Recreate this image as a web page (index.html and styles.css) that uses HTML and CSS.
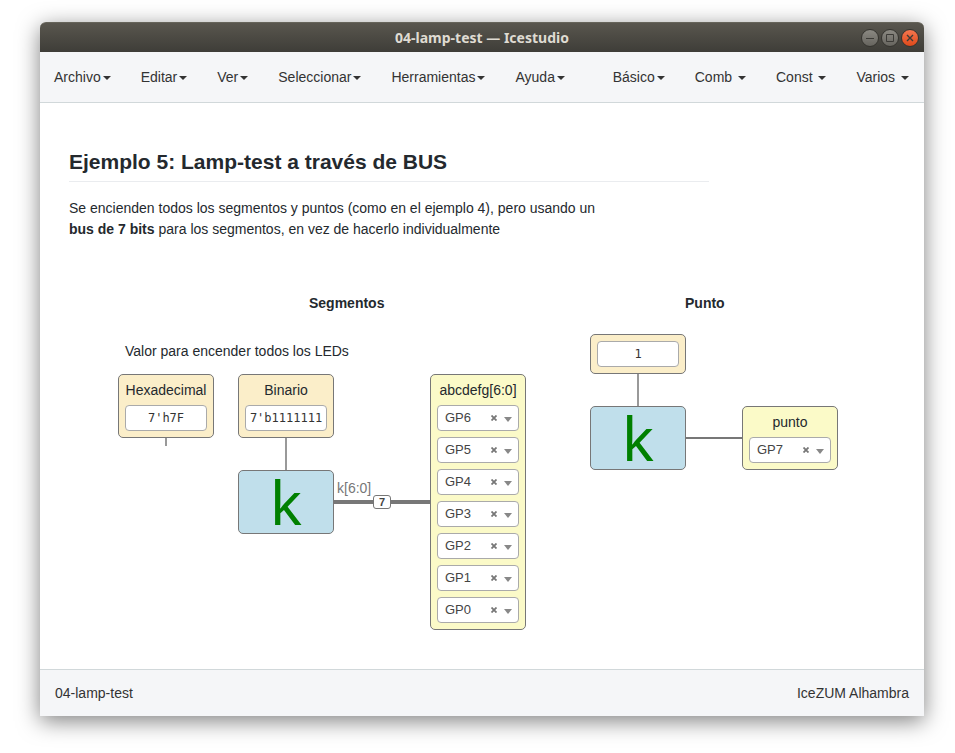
FILE: index.html
```html
<!DOCTYPE html>
<html lang="es">
<head>
<meta charset="utf-8">
<title>04-lamp-test — Icestudio</title>
<link rel="stylesheet" href="styles.css">
</head>
<body>
<div class="window">
  <header class="titlebar">
    <span class="titlebar-text">04-lamp-test — Icestudio</span>
    <div class="controls">
      <button class="control" type="button" aria-label="Minimizar"><svg viewBox="0 0 16 16"><path d="M4 8.5h8"/></svg></button>
      <button class="control" type="button" aria-label="Maximizar"><svg viewBox="0 0 16 16"><path d="M4.5 4.5h7v7h-7z"/></svg></button>
      <button class="control close" type="button" aria-label="Cerrar"><svg viewBox="0 0 16 16"><path d="M5 5l6 6M11 5l-6 6"/></svg></button>
    </div>
  </header>
  <nav class="menubar">
    <div class="menu-group">
      <button class="menu" type="button">Archivo<span class="caret"></span></button>
      <button class="menu" type="button">Editar<span class="caret"></span></button>
      <button class="menu" type="button">Ver<span class="caret"></span></button>
      <button class="menu" type="button">Seleccionar<span class="caret"></span></button>
      <button class="menu" type="button">Herramientas<span class="caret"></span></button>
      <button class="menu" type="button">Ayuda<span class="caret"></span></button>
    </div>
    <div class="menu-group">
      <button class="menu" type="button">Básico<span class="caret"></span></button>
      <button class="menu" type="button">Comb <span class="caret"></span></button>
      <button class="menu" type="button">Const <span class="caret"></span></button>
      <button class="menu" type="button">Varios <span class="caret"></span></button>
    </div>
  </nav>
  <main class="canvas">
    <svg class="wires" aria-hidden="true">
      <path class="wire param" d="M126 335v8M246 335v32M598 271v32"/>
      <path class="wire" d="M646 335h56"/>
      <path class="wire bus" d="M294 399h96"/>
    </svg>

    <section class="info intro">
      <h1>Ejemplo 5: Lamp-test a través de BUS</h1>
      <p>Se encienden todos los segmentos y puntos (como en el ejemplo 4), pero usando un<br><strong>bus de 7 bits</strong> para los segmentos, en vez de hacerlo individualmente</p>
    </section>
    <h2 class="info heading-segments">Segmentos</h2>
    <h2 class="info heading-dot">Punto</h2>
    <p class="info note">Valor para encender todos los LEDs</p>

    <div class="block constant at-hex">
      <label for="hex">Hexadecimal</label>
      <input id="hex" type="text" value="7'h7F">
    </div>
    <div class="block constant at-bin">
      <label for="bin">Binario</label>
      <input id="bin" type="text" value="7'b1111111">
    </div>
    <div class="block generic at-k-bus">k</div>
    <span class="wire-label">k[6:0]</span>
    <span class="bus-size">7</span>

    <div class="block output at-segments">
      <span class="block-label">abcdefg[6:0]</span>
      <div class="pin"><select aria-label="Pin 6"><option>GP6</option></select><button type="button" aria-label="Quitar"><svg viewBox="0 0 6 6"><path d="M.5.5l5 5M5.5.5l-5 5"/></svg></button><span class="arrow"></span></div>
      <div class="pin"><select aria-label="Pin 5"><option>GP5</option></select><button type="button" aria-label="Quitar"><svg viewBox="0 0 6 6"><path d="M.5.5l5 5M5.5.5l-5 5"/></svg></button><span class="arrow"></span></div>
      <div class="pin"><select aria-label="Pin 4"><option>GP4</option></select><button type="button" aria-label="Quitar"><svg viewBox="0 0 6 6"><path d="M.5.5l5 5M5.5.5l-5 5"/></svg></button><span class="arrow"></span></div>
      <div class="pin"><select aria-label="Pin 3"><option>GP3</option></select><button type="button" aria-label="Quitar"><svg viewBox="0 0 6 6"><path d="M.5.5l5 5M5.5.5l-5 5"/></svg></button><span class="arrow"></span></div>
      <div class="pin"><select aria-label="Pin 2"><option>GP2</option></select><button type="button" aria-label="Quitar"><svg viewBox="0 0 6 6"><path d="M.5.5l5 5M5.5.5l-5 5"/></svg></button><span class="arrow"></span></div>
      <div class="pin"><select aria-label="Pin 1"><option>GP1</option></select><button type="button" aria-label="Quitar"><svg viewBox="0 0 6 6"><path d="M.5.5l5 5M5.5.5l-5 5"/></svg></button><span class="arrow"></span></div>
      <div class="pin"><select aria-label="Pin 0"><option>GP0</option></select><button type="button" aria-label="Quitar"><svg viewBox="0 0 6 6"><path d="M.5.5l5 5M5.5.5l-5 5"/></svg></button><span class="arrow"></span></div>
    </div>

    <div class="block constant at-one">
      <input type="text" value="1" aria-label="Valor">
    </div>
    <div class="block generic at-k-dot">k</div>
    <div class="block output at-dot">
      <label for="dot">punto</label>
      <div class="pin"><select id="dot"><option>GP7</option></select><button type="button" aria-label="Quitar"><svg viewBox="0 0 6 6"><path d="M.5.5l5 5M5.5.5l-5 5"/></svg></button><span class="arrow"></span></div>
    </div>
  </main>
  <footer class="statusbar">
    <span>04-lamp-test</span>
    <span>IceZUM Alhambra</span>
  </footer>
</div>
</body>
</html>
```
FILE: styles.css
```css
* {
  box-sizing: border-box;
}

body {
  display: flex;
  min-height: 100vh;
  margin: 0;
  padding: 22px 31px 37px 40px;
  background: #fff;
  color: #24292e;
  font: 14px/20px "Liberation Sans", Arial, sans-serif;
}

button,
input,
select {
  margin: 0;
  font: inherit;
  color: inherit;
}

.window {
  flex: 1;
  display: flex;
  flex-direction: column;
  border-radius: 6px 6px 0 0;
  background: #fff;
  box-shadow: 0 5px 22px rgba(0, 0, 0, 0.5);
}

.titlebar {
  display: grid;
  grid-template-columns: 1fr auto 1fr;
  align-items: center;
  height: 30px;
  padding: 0 5px;
  border-top: 1px solid #66645a;
  border-radius: 6px 6px 0 0;
  background: linear-gradient(#59564e, #3e3d38);
  color: #dfdbd2;
  font: bold 14px/20px "Noto Sans", "Open Sans", sans-serif;
}

.titlebar-text {
  grid-column: 2;
}

.controls {
  display: flex;
  justify-content: flex-end;
  gap: 2px;
}

.control {
  width: 18px;
  height: 18px;
  padding: 0;
  border: 1px solid #35342f;
  border-radius: 50%;
  background: linear-gradient(#8b8982, #66645e);
}

.control svg {
  display: block;
  width: 16px;
  height: 16px;
  fill: none;
  stroke: #3c3b37;
  stroke-width: 1;
}

.control.close {
  background: linear-gradient(#f4764f, #df4a1b);
}

.control.close svg {
  stroke-width: 1.4;
}

.menubar {
  display: flex;
  justify-content: space-between;
  height: 51px;
  border-bottom: 1px solid #d1d8da;
  background: #f5f6f8;
}

.menu-group {
  display: flex;
}

.menu {
  padding: 0 15px;
  border: 0;
  background: none;
  color: #333;
  white-space: pre;
}

.menu-group:first-child .menu:first-child {
  padding-left: 14px;
}

.caret {
  display: inline-block;
  margin-left: 2px;
  border: 4px solid transparent;
  border-top-color: #333;
  border-bottom: 0;
  vertical-align: middle;
}

.canvas {
  position: relative;
  flex: 1;
  min-height: 560px;
}

.wires {
  position: absolute;
  inset: 0;
  width: 100%;
  height: 100%;
}

.wire {
  fill: none;
  stroke: #777;
  stroke-width: 2;
}

.wire.param {
  stroke: #999;
}

.wire.bus {
  stroke-width: 4;
}

.info {
  position: absolute;
  margin: 0;
}

.intro {
  top: 45px;
  left: 29px;
  width: 640px;
}

.intro h1 {
  margin: 0 0 16px;
  padding-bottom: 5px;
  border-bottom: 1px solid #eaecef;
  font-size: 21px;
  line-height: 28px;
}

.intro p {
  margin: 0;
  line-height: 21px;
}

h2.info {
  font-size: 14px;
}

.heading-segments {
  top: 190px;
  left: 269px;
}

.heading-dot {
  top: 190px;
  left: 645px;
}

.note {
  top: 238px;
  left: 85px;
}

.block {
  position: absolute;
  display: flex;
  flex-direction: column;
  gap: 6px;
  width: 96px;
  padding: 6px;
  border: 1px solid #777;
  border-radius: 5px;
}

.block label,
.block-label {
  line-height: 18px;
  text-align: center;
  white-space: nowrap;
}

.constant {
  background: #fbeec9;
}

.output {
  background: #fbfac8;
}

.generic {
  height: 64px;
  padding: 0;
  background: #c0dfeb;
  color: green;
  font: 60px/62px "Noto Sans", "Open Sans", sans-serif;
  text-align: center;
}

.block input {
  width: 100%;
  height: 26px;
  padding: 0;
  border: 1px solid #aaa;
  border-radius: 4px;
  background: #fff;
  color: #333;
  font: 12px/24px "DejaVu Sans Mono", monospace;
  text-align: center;
}

.at-hex {
  top: 271px;
  left: 78px;
}

.at-bin {
  top: 271px;
  left: 198px;
}

.at-k-bus {
  top: 367px;
  left: 198px;
}

.at-segments {
  top: 271px;
  left: 390px;
}

.at-one {
  top: 231px;
  left: 550px;
}

.at-k-dot {
  top: 303px;
  left: 550px;
}

.at-dot {
  top: 303px;
  left: 702px;
}

.wire-label {
  position: absolute;
  top: 375px;
  left: 297px;
  color: #777;
}

.bus-size {
  position: absolute;
  top: 392px;
  left: 333px;
  width: 18px;
  border: 1px solid #777;
  border-radius: 3px;
  background: #fff;
  color: #444;
  font-size: 11px;
  font-weight: bold;
  line-height: 12px;
  text-align: center;
}

.pin {
  position: relative;
  height: 26px;
}

.pin select {
  display: block;
  width: 100%;
  height: 26px;
  padding: 0 0 0 7px;
  border: 1px solid #aaa;
  border-radius: 4px;
  background: #fff;
  color: #444;
  font-size: 13px;
  appearance: none;
}

.pin button {
  position: absolute;
  top: 10px;
  right: 22px;
  width: 6px;
  height: 6px;
  padding: 0;
  border: 0;
  background: none;
}

.pin button svg {
  display: block;
  width: 6px;
  height: 6px;
  stroke: #777;
  stroke-width: 1.8;
}

.arrow {
  position: absolute;
  top: 12px;
  right: 7px;
  border: 4px solid transparent;
  border-top: 5px solid #888;
  border-bottom: 0;
  pointer-events: none;
}

.statusbar {
  display: flex;
  justify-content: space-between;
  align-items: center;
  height: 47px;
  padding: 0 15px;
  border-top: 1px solid #d1d8da;
  background: #f5f6f8;
  color: #333;
}
```
